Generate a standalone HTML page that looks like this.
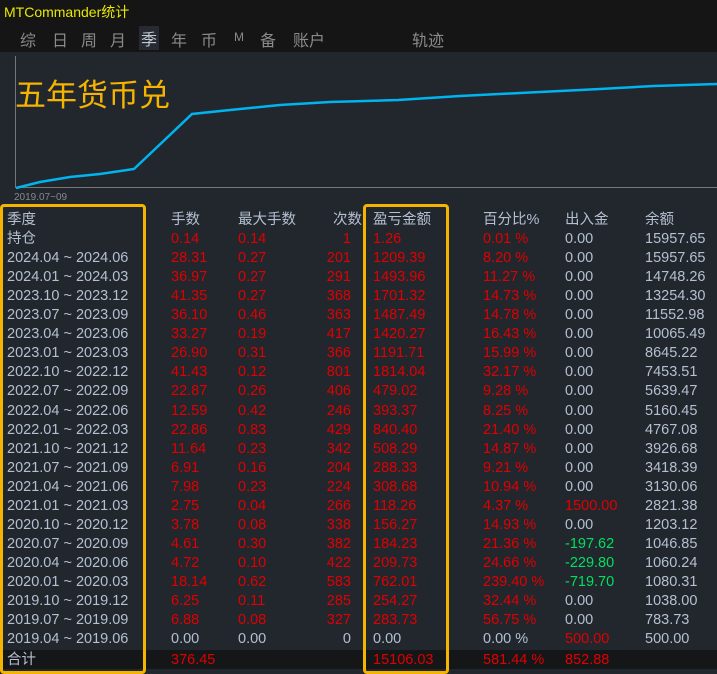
<!DOCTYPE html><html><head><meta charset="utf-8"><style>
body{margin:0;width:717px;height:672px;background:#22262d;overflow:hidden;font-family:"Liberation Sans","Noto Sans CJK SC",sans-serif;position:relative}
.top{position:absolute;left:0;top:0;width:717px;height:52px;background:#151515}
.title{position:absolute;left:4px;top:2px;color:#e8e800;font-size:14px}
.tabs{position:absolute;top:27px;left:0;color:#8a8a8a;font-size:16px}
.tabs span{position:absolute;top:0;white-space:nowrap}
.sel{background:#262b33;color:#c0c8d0;padding:0 2px}
.big{position:absolute;left:15px;top:70px;color:#f5b400;font-size:31px}
.row{position:absolute;left:0;width:717px;height:19px;font-size:14.5px;line-height:19px;color:#b4c0d0}
.row span{position:absolute;white-space:nowrap}
.r{color:#e00000}.g{color:#00e060}
.c1{left:7px}.c2{left:171px}.c3{left:238px}.c4{right:366px;text-align:right}.c5{left:373px}.c6{left:483px}.c7{left:565px}.c8{left:645px}
.box{position:absolute;border:3px solid #f5b400;border-radius:4px;box-sizing:border-box}
</style></head><body>
<div class="top"></div>
<div class="title">MTCommander统计</div>
<div class="tabs">
<span style="left:20px">综</span><span style="left:52px">日</span><span style="left:81px">周</span><span style="left:110px">月</span><span class="sel" style="left:139px;top:-1px">季</span><span style="left:171px">年</span><span style="left:201px">币</span><span style="left:234px;font-size:12px;top:3px">M</span><span style="left:260px">备</span><span style="left:293px">账户</span><span style="left:412px">轨迹</span>
</div>
<svg style="position:absolute;left:0;top:52px" width="717" height="150">
<line x1="15.5" y1="4" x2="15.5" y2="136" stroke="#777" stroke-width="1"/>
<line x1="15" y1="135.5" x2="717" y2="135.5" stroke="#777" stroke-width="1"/>
<polyline fill="none" stroke="#00b4f0" stroke-width="2.5" points="16,136 40,130 70,125 100,122 134,117 192,62 230,58 280,53 330,50 398,48 460,44 520,41 600,37 654,34 717,32"/>
<text x="14" y="148" fill="#888" font-size="10" font-family="Liberation Sans">2019.07~09</text>
</svg>
<div class="big">五年货币兑</div>
<div style="position:absolute;left:0;top:650px;width:717px;height:19px;background:#151618"></div>
<div id="t"></div>
<div class="box" style="left:0;top:204px;width:146px;height:470px"></div>
<div class="box" style="left:363px;top:204px;width:86px;height:470px"></div>
<script>
var d=[["季度","手数","最大手数","次数","盈亏金额","百分比%","出入金","余额",1],
["持仓","0.14","0.14","1","1.26","0.01 %","0.00","15957.65"],
["2024.04 ~ 2024.06","28.31","0.27","201","1209.39","8.20 %","0.00","15957.65"],
["2024.01 ~ 2024.03","36.97","0.27","291","1493.96","11.27 %","0.00","14748.26"],
["2023.10 ~ 2023.12","41.35","0.27","368","1701.32","14.73 %","0.00","13254.30"],
["2023.07 ~ 2023.09","36.10","0.46","363","1487.49","14.78 %","0.00","11552.98"],
["2023.04 ~ 2023.06","33.27","0.19","417","1420.27","16.43 %","0.00","10065.49"],
["2023.01 ~ 2023.03","26.90","0.31","366","1191.71","15.99 %","0.00","8645.22"],
["2022.10 ~ 2022.12","41.43","0.12","801","1814.04","32.17 %","0.00","7453.51"],
["2022.07 ~ 2022.09","22.87","0.26","406","479.02","9.28 %","0.00","5639.47"],
["2022.04 ~ 2022.06","12.59","0.42","246","393.37","8.25 %","0.00","5160.45"],
["2022.01 ~ 2022.03","22.86","0.83","429","840.40","21.40 %","0.00","4767.08"],
["2021.10 ~ 2021.12","11.64","0.23","342","508.29","14.87 %","0.00","3926.68"],
["2021.07 ~ 2021.09","6.91","0.16","204","288.33","9.21 %","0.00","3418.39"],
["2021.04 ~ 2021.06","7.98","0.23","224","308.68","10.94 %","0.00","3130.06"],
["2021.01 ~ 2021.03","2.75","0.04","266","118.26","4.37 %","r1500.00","2821.38"],
["2020.10 ~ 2020.12","3.78","0.08","338","156.27","14.93 %","0.00","1203.12"],
["2020.07 ~ 2020.09","4.61","0.30","382","184.23","21.36 %","g-197.62","1046.85"],
["2020.04 ~ 2020.06","4.72","0.10","422","209.73","24.66 %","g-229.80","1060.24"],
["2020.01 ~ 2020.03","18.14","0.62","583","762.01","239.40 %","g-719.70","1080.31"],
["2019.10 ~ 2019.12","6.25","0.11","285","254.27","32.44 %","0.00","1038.00"],
["2019.07 ~ 2019.09","6.88","0.08","327","283.73","56.75 %","0.00","783.73"],
["2019.04 ~ 2019.06","0.00","0.00","0","0.00","0.00 %","r500.00","500.00",2],
["合计","376.45","","","15106.03","581.44 %","852.88","",3]];
var h="";
d.forEach(function(r,i){var top=211+i*19.05;if(i==23)top=651;
var typ=r[8];h+='<div class="row" style="top:'+top+'px">';
for(var c=0;c<8;c++){var v=r[c],cl="c"+(c+1);
if(c>0&&c<6&&!typ)cl+=" r";
if(typ==3&&c>0)cl+=" r";
if(c==6&&v[0]=="r"){cl+=" r";v=v.slice(1)} if(c==6&&v[0]=="g"){cl+=" g";v=v.slice(1)}
if(typ==1&&c==3)cl="c4";
h+='<span class="'+cl+'"'+(typ==1&&c==3?' style="left:333px;right:auto"':'')+'>'+v+'</span>'}
h+='</div>'});
document.getElementById("t").innerHTML=h;
</script>
</body></html>
